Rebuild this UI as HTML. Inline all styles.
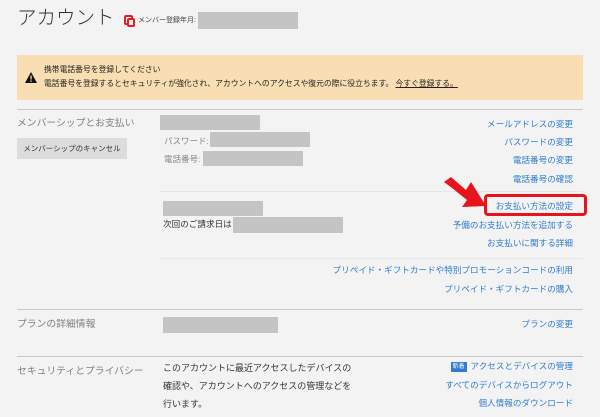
<!DOCTYPE html>
<html><head><meta charset="utf-8"><style>
*{margin:0;padding:0;box-sizing:border-box}
body{width:600px;height:417px;background:#f3f3f3;position:relative;overflow:hidden;font-family:"Liberation Sans","Noto Sans CJK JP",sans-serif;color:#333}
.a{position:absolute;white-space:nowrap;line-height:1}
.g{position:absolute;background:#c4c4c4}
.hr{position:absolute;height:1px;background:#c8c8c8}
.hl{position:absolute;height:1px;background:#e6e6e6}
.l{position:absolute;right:27px;color:#2e7dd1;font-size:8.6px;line-height:1;white-space:nowrap}
.lab{color:#808080;font-size:9.8px}
</style></head><body>
<div class="a" style="left:17px;top:9px;font-size:19.5px;color:#333;font-weight:300">アカウント</div>
<div class="a" style="left:124px;top:15px;width:9px;height:10px;border:2px solid #e51c23;border-radius:2px"></div>
<div class="a" style="left:127px;top:18px;width:8px;height:9px;border:2px solid #e51c23;background:#f3f3f3;border-radius:2px"></div>
<div class="a" style="left:138px;top:17px;font-size:7px;color:#444">メンバー登録年月:</div>
<div class="g" style="left:198px;top:12px;width:100px;height:17px"></div>

<div class="a" style="left:17px;top:55px;width:566px;height:45px;background:#f8deb2"></div>
<svg class="a" style="left:25px;top:72px" width="12" height="11"><polygon points="6,0 12,11 0,11" fill="#111"/><rect x="5.4" y="3.5" width="1.3" height="4" fill="#f8deb2"/><rect x="5.4" y="8.5" width="1.3" height="1.3" fill="#f8deb2"/></svg>
<div class="a" style="left:44px;top:66px;font-size:7.8px;color:#222">携帯電話番号を登録してください</div>
<div class="a" style="left:44px;top:80px;font-size:7.8px;color:#222">電話番号を登録するとセキュリティが強化され、アカウントへのアクセスや復元の際に役立ちます。 <span style="text-decoration:underline">今すぐ登録する。</span></div>

<div class="hr" style="left:17px;top:109px;width:566px"></div>
<div class="a lab" style="left:17px;top:119px">メンバーシップとお支払い</div>
<div class="a" style="left:17px;top:138px;width:110px;height:21px;background:#dcdcdc;font-size:7.5px;color:#333;text-align:center;line-height:21px">メンバーシップのキャンセル</div>
<div class="g" style="left:160px;top:115px;width:100px;height:15px"></div>
<div class="a" style="left:164px;top:137px;font-size:8.5px;color:#888">パスワード:</div>
<div class="g" style="left:210px;top:132px;width:100px;height:15px"></div>
<div class="a" style="left:164px;top:155px;font-size:8.5px;color:#888">電話番号:</div>
<div class="g" style="left:203px;top:151px;width:100px;height:15px"></div>
<div class="l" style="top:120px">メールアドレスの変更</div>
<div class="l" style="top:138px">パスワードの変更</div>
<div class="l" style="top:156px">電話番号の変更</div>
<div class="l" style="top:175px">電話番号の確認</div>
<div class="hl" style="left:160px;top:191px;width:423px"></div>

<div class="a" style="left:484px;top:194px;width:103px;height:22px;border:3px solid #e8141b;border-radius:4px"></div>
<svg class="a" style="left:438px;top:176px" width="50" height="40"><polygon points="6,6 13,1 28,14 33,6 48,30 24,31 29,24 14,12" fill="#e8141b"/></svg>
<div class="l" style="top:202px">お支払い方法の設定</div>
<div class="g" style="left:163px;top:201px;width:100px;height:15px"></div>
<div class="a" style="left:163px;top:220px;font-size:8.6px;color:#333">次回のご請求日は</div>
<div class="g" style="left:233px;top:217px;width:110px;height:16px"></div>
<div class="l" style="top:221px">予備のお支払い方法を追加する</div>
<div class="l" style="top:239px">お支払いに関する詳細</div>
<div class="hl" style="left:160px;top:258px;width:423px"></div>
<div class="l" style="top:266px">プリペイド・ギフトカードや特別プロモーションコードの利用</div>
<div class="l" style="top:285px">プリペイド・ギフトカードの購入</div>

<div class="hr" style="left:17px;top:309px;width:566px"></div>
<div class="a lab" style="left:17px;top:320px">プランの詳細情報</div>
<div class="g" style="left:163px;top:317px;width:115px;height:16px"></div>
<div class="l" style="top:320px">プランの変更</div>

<div class="hr" style="left:17px;top:356px;width:566px"></div>
<div class="a lab" style="left:17px;top:367px">セキュリティとプライバシー</div>
<div class="a" style="left:163px;top:359px;font-size:9px;color:#333;line-height:18px">このアカウントに最近アクセスしたデバイスの<br>確認や、アカウントへのアクセスの管理などを<br>行います。</div>
<div class="l" style="top:362px"><span style="display:inline-block;background:#2e7dd1;color:#fff;font-size:6px;padding:2px 2px;margin-right:4px;vertical-align:1px">新着</span>アクセスとデバイスの管理</div>
<div class="l" style="top:381px">すべてのデバイスからログアウト</div>
<div class="l" style="top:399px">個人情報のダウンロード</div>
</body></html>
